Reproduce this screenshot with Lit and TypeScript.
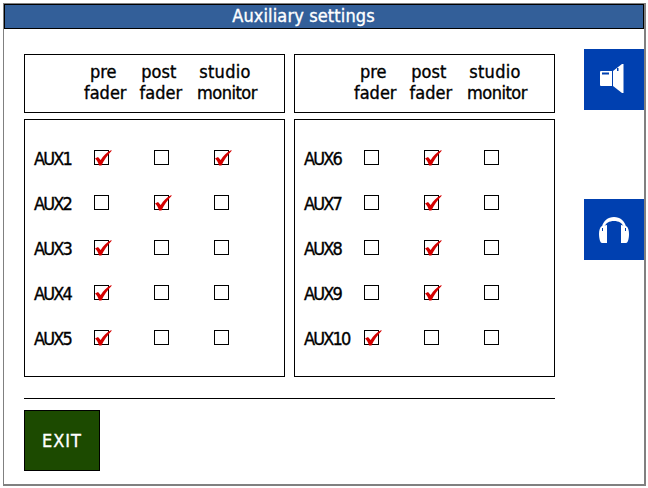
import { LitElement, html, css, svg } from "lit";
import { customElement } from "lit/decorators.js";

const left: [string, number][] = [["AUX1", 0b101], ["AUX2", 0b010], ["AUX3", 0b100], ["AUX4", 0b100], ["AUX5", 0b100]];
const right: [string, number][] = [["AUX6", 0b010], ["AUX7", 0b010], ["AUX8", 0b010], ["AUX9", 0b010], ["AUX10", 0b100]];

const tick = svg`<svg class="tick" viewBox="0 0 18 16" width="18" height="16"><path d="M1 8.5 L4 7 L6.7 10 C9 6 13 2 17.5 0 L17.5 1 C13.5 5 10 10 7.5 15.5 L5 15.5 C4.5 13 3 10.5 1 8.5 Z" fill="#d40000"/></svg>`;

@customElement("app-root")
export class AppRoot extends LitElement {
  static styles = css`
    :host { display: block; width: 648px; height: 488px; background: #fff; font-family: "DejaVu Sans", sans-serif; font-stretch: condensed; color: #000; font-size: 18px; -webkit-text-stroke: 0.35px currentColor; }
    .frame { box-sizing: border-box; width: 643px; height: 483px; margin: 3px 0 0 3px; border: 1px solid #808080; border-right-width: 2px; border-bottom-width: 2px; display: flex; flex-direction: column; }
    .title { box-sizing: border-box; height: 25px; flex: none; background: #335f99; border: 1px solid #000; padding-right: 41px; color: #fff; line-height: 22px; text-align: center; letter-spacing: 0.13px; }
    .body { flex: 1; display: flex; padding: 20px 0 0 20px; }
    .main { width: 531px; flex: none; display: flex; flex-direction: column; }
    .grid { display: grid; grid-template-columns: 261px 261px; column-gap: 9px; row-gap: 6px; padding-top: 5px; }
    .panel { box-sizing: border-box; border: 1px solid #000; }
    .head { height: 59px; display: flex; padding: 6px 0 0 59px; gap: 13px; line-height: 21px; text-align: center; }
    .head div { white-space: nowrap; }
    .head .top { padding-right: 4px; }
    .head .mon { margin-left: 2px; letter-spacing: -0.5px; }
    .head .mon .top { letter-spacing: 0.3px; }
    .rows { height: 258px; padding: 15px 0 0 9px; }
    .row { display: grid; grid-template-columns: 37px 60px 60px 60px; height: 45px; align-items: center; }
    .name { letter-spacing: -1.8px; white-space: nowrap; padding-top: 2px; }
    .cell { display: flex; justify-content: center; }
    .box { position: relative; box-sizing: border-box; width: 15px; height: 15px; border: 1px solid #000; background: #fff; }
    .tick { position: absolute; left: -1px; top: -1px; }
    hr { margin: 21px 0 0; height: 1px; border: 0; background: #000; }
    .exit { box-sizing: border-box; margin-top: 11px; width: 76px; height: 61px; background: #1c4a00; border: 1px solid #000; color: #fff; letter-spacing: 1px; display: flex; align-items: center; justify-content: center; }
    .side { flex: 1; display: flex; flex-direction: column; align-items: flex-end; gap: 89px; }
    .side button { width: 60px; height: 61px; padding: 0; border: 0; background: #0040b0; display: flex; align-items: center; justify-content: center; }
    .spk { margin: 0 5px 2px 0; }
  `;

  private table(rows: [string, number][]) {
    return html`<div class="panel rows">
      ${rows.map(([name, mask]) => html`<div class="row"><span class="name">${name}</span>
        ${[4, 2, 1].map((bit) => html`<div class="cell"><div class="box">${mask & bit ? tick : ""}</div></div>`)}
      </div>`)}
    </div>`;
  }

  private header() {
    return html`<div class="panel head">
      <div><span class="top">pre</span><br />fader</div><div><span class="top">post</span><br />fader</div><div class="mon"><span class="top">studio</span><br />monitor</div>
    </div>`;
  }

  render() {
    return html`<div class="frame">
      <div class="title">Auxiliary settings</div>
      <div class="body">
        <div class="main">
          <div class="grid">
            ${this.header()}${this.header()}
            ${this.table(left)}${this.table(right)}
          </div>
          <hr />
          <div class="exit">EXIT</div>
        </div>
        <div class="side">
          <button aria-label="speaker">
            <svg class="spk" width="24" height="30" viewBox="0 0 24 30"><path d="M1 7 H12 V22 H1 Q0 22 0 21 V8 Q0 7 1 7 Z" fill="#fff"/><rect x="2" y="8.5" width="7" height="2" fill="#0040b0"/><path d="M13 7 L22 0 H23.5 V29 H22 L13 22 Z" fill="#fff"/><rect x="17" y="4" width="1.5" height="3" fill="#0040b0"/></svg>
          </button>
          <button aria-label="headphones">
            <svg width="30" height="26" viewBox="0 0 30 26"><path d="M3 10 C4 4 9 0 15 0 C21 0 26 4 27 10 L25 10 C23 6 20 4 15 4 C10 4 7 6 5 10 Z" fill="#fff"/><path d="M8 8 V26 H3 C1 26 0 21 0 17 C0 13 1 10 3 9 Z" fill="#fff"/><path d="M22 8 V26 H27 C29 26 30 21 30 17 C30 13 29 10 27 9 Z" fill="#fff"/><rect x="3" y="11" width="1" height="3" fill="#0040b0"/><rect x="26" y="11" width="1" height="3" fill="#0040b0"/></svg>
          </button>
        </div>
      </div>
    </div>`;
  }
}
